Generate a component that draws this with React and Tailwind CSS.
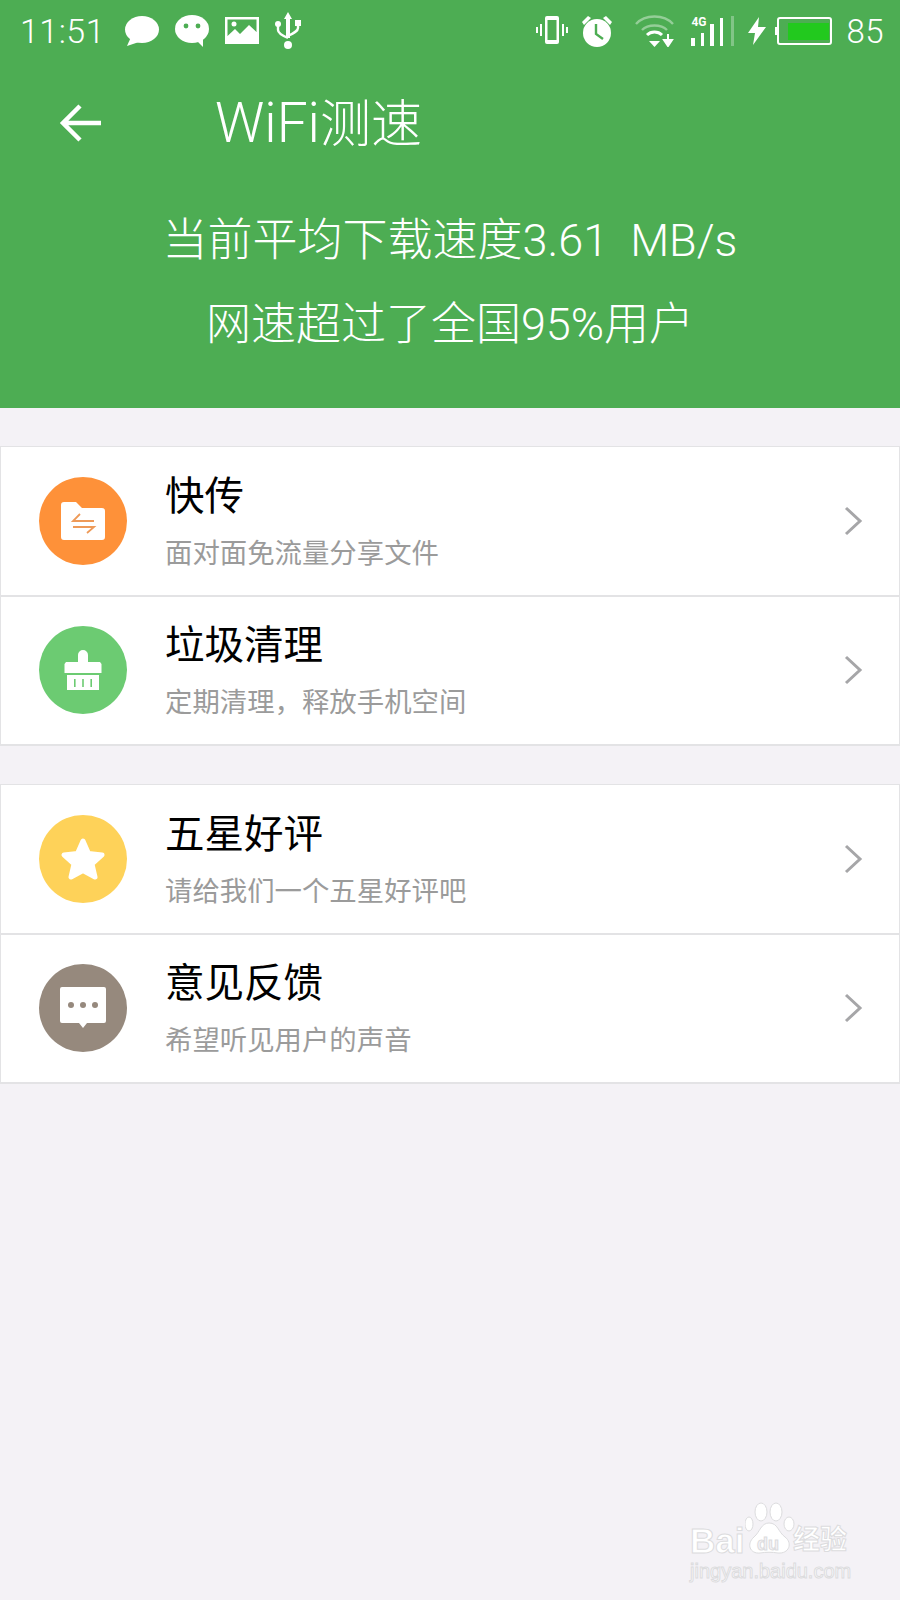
import React from 'react';

const cjk = "font-['Roboto','Noto_Sans_CJK_SC',sans-serif]";

function StatusLeft() {
  return (
    <div className="flex items-center">
      <span className="text-[34px] leading-none font-light text-white tracking-[0.5px] w-[104px] ml-[20px]">11:51</span>
      <svg width="36" height="32" viewBox="0 0 36 32" fill="white">
        <ellipse cx="18" cy="14.5" rx="17" ry="13.5" />
        <path d="M7 22 L3 31 L15 27 Z" />
      </svg>
      <svg width="36" height="34" viewBox="0 0 36 34" className="ml-[14px]" fill="white">
        <ellipse cx="18" cy="15" rx="17" ry="14" />
        <path d="M22 26 L29 33 L29 24 Z" />
        <circle cx="12" cy="12" r="2.4" fill="#4dad53" />
        <circle cx="24" cy="12" r="2.4" fill="#4dad53" />
      </svg>
      <svg width="34" height="28" viewBox="0 0 34 28" className="ml-[15px]">
        <path fillRule="evenodd" fill="white" d="M0 0H34V27H0ZM2.5 2.5V19L10 12L15 17L24 8L31.5 15V2.5Z" />
        <circle cx="9" cy="7" r="2.5" fill="white" />
      </svg>
      <svg width="26" height="38" viewBox="0 0 26 38" className="ml-[16px]" fill="white">
        <path d="M13 0L17 7H15V26H11V7H9Z" />
        <circle cx="13" cy="33" r="4" />
        <path d="M3 13V18C3 21 6 23 13 26" fill="none" stroke="white" strokeWidth="2.4" />
        <path d="M23 13V16C23 19 19 21 13 24" fill="none" stroke="white" strokeWidth="2.4" />
        <circle cx="3" cy="12" r="3" />
        <rect x="20" y="8" width="6" height="6" />
      </svg>
    </div>
  );
}

function StatusRight() {
  return (
    <div className="flex items-center">
      <svg width="32" height="30" viewBox="0 0 32 30" fill="white">
        <path fillRule="evenodd" d="M9 2a2 2 0 0 1 2-2H21a2 2 0 0 1 2 2V26a2 2 0 0 1-2 2H11a2 2 0 0 1-2-2ZM11.5 4V24H20.5V4Z" />
        <rect x="4" y="8" width="2" height="12" />
        <rect x="0" y="11" width="2" height="6" />
        <rect x="26" y="8" width="2" height="12" />
        <rect x="30" y="11" width="2" height="6" />
      </svg>
      <svg width="32" height="32" viewBox="0 0 32 32" className="ml-[13px]" fill="white">
        <circle cx="16" cy="18" r="14" />
        <path d="M1 7L7 1L10 3L3 10Z" />
        <path d="M31 7L25 1L22 3L29 10Z" />
        <path d="M15 9V19L22 24" fill="none" stroke="#4dad53" strokeWidth="2.4" />
      </svg>
      <svg width="40" height="32" viewBox="0 0 40 32" className="ml-[22px]" fill="none">
        <path d="M1 9C10 -1 29 -1 38 9" stroke="white" strokeOpacity="0.4" strokeWidth="2.4" />
        <path d="M7 15C13 9 26 9 32 15" stroke="white" strokeOpacity="0.4" strokeWidth="2.4" />
        <path d="M12 20C16 16 23 16 27 20" stroke="white" strokeWidth="3" />
        <path d="M14 26H25L19.5 32Z" fill="white" />
        <path d="M33 19V26M29 25H37L33 31Z" stroke="white" strokeWidth="2" fill="white" />
      </svg>
      <div className="ml-[15px] relative w-[35px] h-[30px]">
        <span className="absolute left-[1px] -top-[1px] text-[12px] leading-[14px] font-bold text-white font-['Roboto',sans-serif]">4G</span>
        <div className="absolute inset-0 flex items-end gap-[6px] px-[1px]">
          <div className="w-[3.5px] h-[8px] bg-white" />
          <div className="w-[3.5px] h-[13px] bg-white" />
          <div className="w-[3.5px] h-[22px] bg-white" />
          <div className="w-[3.5px] h-[28px] bg-white" />
        </div>
      </div>
      <div className="ml-[6px] w-[3px] h-[30px] bg-white/30" />
      <svg width="18" height="28" viewBox="0 0 18 28" className="ml-[14px]" fill="white">
        <path d="M11 0L0 16H7L5 28L18 10H10Z" />
      </svg>
      <div className="ml-[11px] relative w-[55px] h-[28px] border-2 border-white rounded-[3px] flex items-center justify-end pr-[1px]">
        <div className="absolute -left-[4px] top-[8px] w-[2px] h-[8px] bg-white" />
        <div className="w-[41px] h-[17px] bg-[#22c91e]" />
      </div>
      <span className="ml-[14px] mr-[16px] text-[33px] leading-none font-light text-white tracking-[0.5px]">85</span>
    </div>
  );
}

function CleanIcon() {
  return (
    <svg width="38" height="40" viewBox="0 0 38 40" fill="white">
      <path d="M14 12V5a5 5 0 0 1 10 0V12H36L37.5 14V23H0.5V14L2 12Z" />
      <path fillRule="evenodd" d="M3 25H35V40H3ZM10 29V37H11.6V29ZM18.2 29V37H19.8V29ZM26.4 29V37H28V29Z" />
    </svg>
  );
}

const groups = [
  [
    {
      title: '快传',
      desc: '面对面免流量分享文件',
      bg: 'bg-[#fe9139]',
      icon: (
        <svg width="44" height="38" viewBox="0 0 44 38">
          <path fill="white" d="M3 0H15L21 6H41a3 3 0 0 1 3 3V35a3 3 0 0 1-3 3H3a3 3 0 0 1-3-3V3a3 3 0 0 1 3-3Z" />
          <path fill="none" stroke="#ee9a58" strokeWidth="1.8" d="M19 12L12 19H33M12 25H33L26 31" />
        </svg>
      ),
    },
    { title: '垃圾清理', desc: '定期清理，释放手机空间', bg: 'bg-[#6ccb72]', icon: <CleanIcon /> },
  ],
  [
    {
      title: '五星好评',
      desc: '请给我们一个五星好评吧',
      bg: 'bg-[#fed259]',
      icon: (
        <svg width="46" height="44" viewBox="0 0 46 44" fill="white" stroke="white" strokeWidth="5" strokeLinejoin="round">
          <path d="M23 4L28.5 16.5L42 18L32 27L35 40L23 33.5L11 40L14 27L4 18L17.5 16.5Z" />
        </svg>
      ),
    },
    {
      title: '意见反馈',
      desc: '希望听见用户的声音',
      bg: 'bg-[#96897d]',
      icon: (
        <svg width="46" height="42" viewBox="0 0 46 42">
          <path fill="white" d="M2 0H44a2 2 0 0 1 2 2V34a2 2 0 0 1-2 2H27L23 41L19 36H2a2 2 0 0 1-2-2V2a2 2 0 0 1 2-2Z" />
          <circle cx="11" cy="18" r="3" fill="#96897d" />
          <circle cx="23" cy="18" r="3" fill="#96897d" />
          <circle cx="35" cy="18" r="3" fill="#96897d" />
        </svg>
      ),
    },
  ],
];

function Row({ item }) {
  return (
    <div className="h-[149.5px] bg-white flex items-center border-x border-b-2 border-[#e3e3e5] pl-[38px] pr-[36px]">
      <div className={`w-[88px] h-[88px] rounded-full flex items-center justify-center shrink-0 ${item.bg}`}>
        {item.icon}
      </div>
      <div className="ml-[38px] pt-[2px] flex-1 flex flex-col">
        <span className="text-[39.5px] leading-[50px] text-black">{item.title}</span>
        <span className="mt-[14px] text-[27.4px] leading-[36px] text-[#9b9b9b]">{item.desc}</span>
      </div>
      <svg width="20" height="30" viewBox="0 0 20 30" fill="none" stroke="#a6a6a8" strokeWidth="3">
        <path d="M3 2L17 15L3 28" />
      </svg>
    </div>
  );
}

export default function App() {
  return (
    <div className={`relative w-[900px] h-[1600px] bg-[#f4f2f6] overflow-hidden ${cjk}`}>
      <header className="h-[408px] bg-[#4dad53] text-white flex flex-col">
        <div className="h-[62px] flex items-center justify-between">
          <StatusLeft />
          <StatusRight />
        </div>
        <div className="h-[122px] flex items-center">
          <svg width="44" height="40" viewBox="0 0 44 40" className="ml-[59px]" fill="none" stroke="white" strokeWidth="4.5">
            <path d="M42 20H4M21 3L4 20L21 37" />
          </svg>
          <span className="ml-[112px] text-[51px] leading-none font-light">
            <span className="text-[55px]">WiFi</span>测速
          </span>
        </div>
        <div className="mt-[15px] flex flex-col items-center text-[45px] leading-[84px] font-light whitespace-pre">
          <span>当前平均下载速度3.61  MB/s</span>
          <span>网速超过了全国95%用户</span>
        </div>
      </header>

      {groups.map((group, i) => (
        <section key={i} className="mt-[38px] border-t border-[#e3e3e5]">
          {group.map((item) => (
            <Row key={item.title} item={item} />
          ))}
        </section>
      ))}

      {/* baidu watermark */}
      <div className="absolute left-[690px] top-[1502px] w-[170px] h-[76px] text-white">
        <span className="absolute left-0 top-[21px] text-[35px] leading-[36px] font-bold [-webkit-text-stroke:1px_#dcdcde] font-['Liberation_Sans',sans-serif]">Bai</span>
        <svg width="50" height="56" viewBox="0 0 50 56" className="absolute left-[55px] top-0" fill="white" stroke="#dcdcde" strokeWidth="1">
          <ellipse cx="4" cy="22" rx="4" ry="7" />
          <ellipse cx="16" cy="10" rx="6" ry="9" />
          <ellipse cx="31" cy="10" rx="6" ry="9" />
          <ellipse cx="44" cy="22" rx="5" ry="7" />
          <path d="M24 21C33 21 33 30 40 35C48 41 44 52 33 51C27 50 21 50 15 51C5 52 1 42 9 35C15 30 16 21 24 21Z" />
        </svg>
        <span className="absolute left-[67px] top-[33px] text-[18px] leading-[18px] font-bold text-[#f4f2f6] [-webkit-text-stroke:1px_#dcdcde] font-['Liberation_Sans',sans-serif]">du</span>
        <span className="absolute left-[103px] top-[21px] text-[27px] leading-[34px] font-bold [-webkit-text-stroke:1px_#dcdcde]">经验</span>
        <span className="absolute left-0 top-[58px] text-[20px] leading-[22px] whitespace-nowrap [-webkit-text-stroke:1px_#dcdcde] font-['Liberation_Sans',sans-serif]">jingyan.baidu.com</span>
      </div>
    </div>
  );
}
